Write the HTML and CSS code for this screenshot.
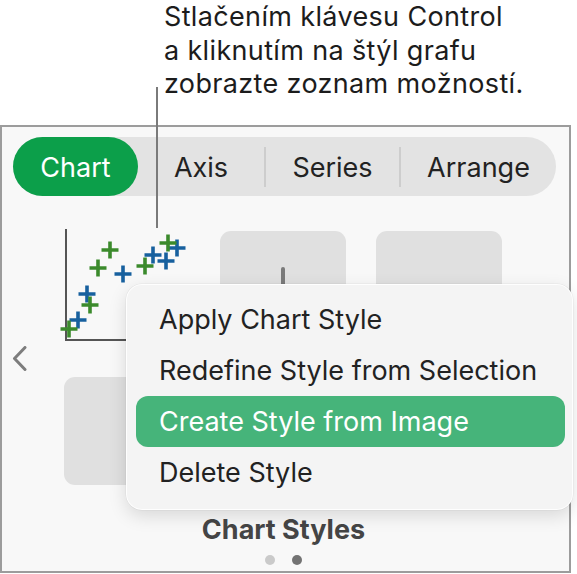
FILE: index.html
```html
<!DOCTYPE html>
<html lang="sk">
<head>
<meta charset="utf-8">
<link rel="stylesheet" href="styles.css">
</head>
<body>
<div class="page">
  <div class="caption">Stlačením klávesu Control<br>a kliknutím na štýl grafu<br>zobrazte zoznam možností.</div>
  <div class="leader"></div>
  <div class="panel">
    <div class="tabs">
      <div class="tab tab-chart active">Chart</div>
      <div class="tab tab-axis">Axis</div>
      <div class="sep"></div>
      <div class="tab tab-series">Series</div>
      <div class="sep"></div>
      <div class="tab tab-arrange">Arrange</div>
    </div>
    <div class="styles">
      <svg class="chev" width="15" height="25" viewBox="0 0 15 25"><polyline points="13,1.5 2.5,12.5 13,23.5" fill="none" stroke="#7d7d7d" stroke-width="3" stroke-linecap="round" stroke-linejoin="round"/></svg>
      <div class="grid">
        <div class="thumb scatter">
          <svg class="plot" width="126" height="108" viewBox="0 0 126 108">
            <g fill="none" stroke="#555" stroke-width="2">
              <path d="M2 -2V109H126"/>
            </g>
            <g fill="none" stroke-width="3.6">
              <path stroke="#3b8a2c" d="M37.5 19h17M46 10.5v17"/>
              <path stroke="#3b8a2c" d="M25.5 37h17M34 28.5v17"/>
              <path stroke="#17609e" d="M50.5 43h17M59 34.5v17"/>
              <path stroke="#3b8a2c" d="M72.5 35h17M81 26.5v17"/>
              <path stroke="#17609e" d="M80.5 24h17M89 15.5v17"/>
              <path stroke="#17609e" d="M93.5 30h17M102 21.5v17"/>
              <path stroke="#17609e" d="M104.5 17h17M113 8.5v17"/>
              <path stroke="#3b8a2c" d="M95.5 12h17M104 3.5v17"/>
              <path stroke="#17609e" d="M14.5 63h17M23 54.5v17"/>
              <path stroke="#3b8a2c" d="M17.5 74h17M26 65.5v17"/>
              <path stroke="#17609e" d="M5.5 89h17M14 80.5v17"/>
              <path stroke="#3b8a2c" d="M-3.5 98h17M5 89.5v17"/>
            </g>
          </svg>
        </div>
        <div class="thumb plain"><span class="stick"></span></div>
        <div class="thumb plain"></div>
        <div class="thumb plain"></div>
      </div>
    </div>
    <div class="label">Chart Styles</div>
    <div class="dots"><span class="dot"></span><span class="dot current"></span></div>
    <div class="menu">
      <div class="item">Apply Chart Style</div>
      <div class="item">Redefine Style from Selection</div>
      <div class="item selected">Create Style from Image</div>
      <div class="item">Delete Style</div>
    </div>
  </div>
</div>
</body>
</html>
```
FILE: styles.css
```css
html, body {
  margin: 0;
  padding: 0;
  background: #ffffff;
}
body {
  font-family: Inter, "Liberation Sans", sans-serif;
  color: #1e1e1e;
}
.page {
  position: relative;
  width: 577px;
  height: 574px;
  overflow: hidden;
}
.caption {
  margin-left: 164px;
  padding-top: 0;
  font-size: 27px;
  letter-spacing: 0.35px;
  line-height: 33.5px;
  height: 125px;
  color: #1c1c1c;
}
.leader {
  position: absolute;
  left: 156px;
  top: 87px;
  width: 1.5px;
  height: 141px;
  background: #7a7a7a;
  z-index: 3;
}
.panel {
  position: relative;
  width: 571px;
  box-sizing: border-box;
  border: 2px solid #9c9c9c;
  background: #f8f8f8;
  padding: 10px 0 6px;
}
.tabs {
  display: flex;
  align-items: center;
  margin-left: 11px;
  width: 543px;
  height: 59px;
  border-radius: 30px;
  background: #e3e3e3;
}
.tab {
  height: 59px;
  line-height: 59px;
  font-size: 27px;
  text-align: center;
  color: #222;
  padding-top: 1px;
  box-sizing: border-box;
}
.tab-chart { width: 125px; }
.tab-axis { width: 126px; }
.tab-series { width: 133px; }
.tab-arrange { width: 155px; }
.tab.active {
  background: #0c9f4a;
  color: #fff;
  border-radius: 30px;
}
.sep {
  width: 2px;
  height: 40px;
  background: #cdcdcd;
}
.styles {
  display: flex;
  align-items: center;
  margin-top: 35px;
}
.chev {
  margin-left: 10px;
  display: block;
}
.grid {
  margin-left: 37px;
  display: grid;
  grid-template-columns: repeat(3, 126px);
  grid-template-rows: repeat(2, 108px);
  column-gap: 30px;
  row-gap: 38px;
}
.thumb {
  position: relative;
  border-radius: 11px;
}
.thumb.plain {
  background: #e0e0e0;
}
.plot {
  display: block;
  overflow: visible;
}
.stick {
  position: absolute;
  left: 61px;
  top: 36px;
  width: 4px;
  height: 60px;
  border-radius: 2px;
  background: #7a7a7a;
}
.label {
  margin-top: 29.5px;
  padding-right: 4px;
  text-align: center;
  font-size: 27px;
  line-height: 30px;
  font-weight: 700;
  color: #454545;
}
.dots {
  display: flex;
  justify-content: center;
  gap: 17px;
  margin-top: 10.5px;
  padding-right: 4px;
}
.dot {
  width: 10px;
  height: 10px;
  border-radius: 50%;
  background: #cacaca;
}
.dot.current {
  background: #737373;
}
.menu {
  position: absolute;
  left: 124px;
  top: 157px;
  width: 447px;
  box-sizing: border-box;
  padding: 9px 7px 11px 9px;
  border-radius: 16px;
  background: #f4f4f4;
  border: 1px solid rgba(255, 255, 255, 0.9);
  box-shadow: 0 6px 18px rgba(0, 0, 0, 0.13), 0 0 0 0.5px rgba(0, 0, 0, 0.06);
  z-index: 2;
}
.item {
  height: 51px;
  line-height: 51px;
  padding-left: 23px;
  font-size: 27px;
  color: #222;
  border-radius: 12px;
}
.item.selected {
  background: #46b47a;
  color: #fff;
}
```
